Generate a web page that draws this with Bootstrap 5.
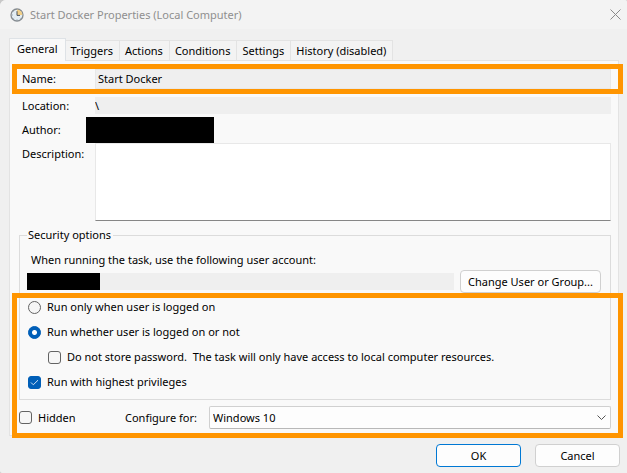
<!DOCTYPE html>
<html lang="en">
<head>
<meta charset="utf-8">
<meta name="viewport" content="width=device-width, initial-scale=1">
<title>Start Docker Properties (Local Computer)</title>
<link href="https://cdn.jsdelivr.net/npm/bootstrap@5.3.0/dist/css/bootstrap.min.css" rel="stylesheet">
<style>
  body { background: #c8c8c8; font-family: "Noto Sans", "Open Sans", sans-serif; font-size: 11px; line-height: 16px; color: #000; }
  .dialog { background: #f0f0f0; border-radius: 6px 2px 0 2px; overflow: hidden; min-height: 100vh; }
  .title-bar { background: #f3f3f3; height: 29px; padding: 0 6px 0 10px; color: #8f8f8f; }
  .title-bar h1 { font-size: 11px; line-height: 16px; font-weight: 400; margin: 0 0 0 6px; }
  .close-x { background: none; border: 0; padding: 0; line-height: 0; color: #8a8a8a; }

  .tabs { padding: 9px 8px 0 9px; border: 0; }
  .tabs .nav-link { color: #000; background: #f3f3f3; border: 1px solid #e3e3e3; border-left: 0; border-bottom: 0; border-radius: 0; padding: 2px 6px 2px 5px; height: 20px; margin: 0; line-height: 16px; }
  .tabs .nav-link.active { color: #000; background: #f9f9f9; border-left: 1px solid #e3e3e3; height: 23px; padding: 2px 7px 4px; margin-bottom: -1px; position: relative; z-index: 1; }

  .sheet { background: #f9f9f9; border: 1px solid #e3e3e3; margin: 0 8px 0 9px; padding: 8px 7px 6px 9px; }
  .field-label { width: 76px; padding-left: 3px; flex: none; }
  .callout-frame { position: absolute; border: 5px solid #ff9500; pointer-events: none; }
  .frame-name { inset: -5px -12px -5px -7px; }
  .frame-security { left: 2px; right: -5px; bottom: -3px; height: 145px; }

  .plain-field { background: #efefef; border: 0; border-radius: 0; padding: 0 2px; font-size: 11px; line-height: 16px; min-height: 0; color: #000; min-width: 0; }
  .plain-field.name-field { height: 20px; border: 1px solid #e8e8e8; padding-bottom: 2px; }
  .plain-field.path-field { height: 17px; padding: 0; }
  .author-row { margin-top: 3px; }
  .notes-label { padding-top: 3px; }
  .redacted { background: #000; flex: none; }
  .redacted.author-name { width: 128px; height: 26px; margin-left: -9px; }
  .redacted.account-name { width: 73px; height: 17px; }
  .notes { border: 1px solid #e8e8e8; border-bottom-color: #868686; border-radius: 0; height: 78px; min-height: 0; font-size: 11px; padding: 2px; resize: none; }

  .group { border: 1px solid #dcdcdc; padding: 0 9px 9px 7px; margin-top: 6px; }
  .group legend { float: none; width: auto; margin: 0 0 9px; padding: 0 2px 0 1px; font-size: 11px; line-height: 16px; }
  .account-fill { background: #efefef; height: 17px; margin-right: 6px; }
  .account-row { margin: 2px 0 6px; }
  .choices { display: flex; flex-direction: column; gap: 9px; }

  .choice { display: flex; align-items: center; gap: 6px; padding: 0; margin: 0; min-height: 16px; }
  .choice .form-check-input { float: none; margin: 0 0 0 1px; width: 13px; height: 13px; flex: none; border: 1px solid #636363; background-color: #f6f6f6; }
  .choice .form-check-input[type=checkbox] { border-radius: 3px; }
  .choice .form-check-input:checked { background-color: #005fb8; border-color: #005fb8; }
  .choice .form-check-input[type=radio]:checked { background-image: radial-gradient(circle, #fff 0 2px, transparent 3px); }
  .choice .form-check-input[type=checkbox]:checked { background-image: url("data:image/svg+xml,%3Csvg xmlns='http://www.w3.org/2000/svg' viewBox='0 0 11 11'%3E%3Cpath d='M2 5.5l2.3 2.3L9 3.2' fill='none' stroke='%23cfe2f5'/%3E%3C/svg%3E"); background-size: 11px 11px; }
  .choice.nested { margin-left: 20px; }
  .options-row { margin-top: 6px; }
  .hidden-choice { width: 106px; flex: none; }
  .hidden-choice .form-check-input { margin-left: 0; }
  .version-label { width: 84px; flex: none; }

  .version-select { font-size: 11px; line-height: 16px; height: 23px; padding: 3px 20px 2px 3px; border: 1px solid #d0d0d0; border-bottom-color: #b8b8b8; border-radius: 2px; color: #000; background-color: #fdfdfd; background-position: right 4px center; background-size: 9px 9px;
    background-image: url("data:image/svg+xml,%3Csvg xmlns='http://www.w3.org/2000/svg' viewBox='0 0 9 9'%3E%3Cpath d='M.5 2.5l4 4 4-4' fill='none' stroke='%23555'/%3E%3C/svg%3E"); }

  .push { font-size: 11px; line-height: 16px; height: 23px; padding: 2px 6px; border: 1px solid #d0d0d0; border-radius: 4px; background: #fdfdfd; color: #000; }
  .push.change-user { width: 141px; }
  .push.answer { width: 85px; }
  .push.default-answer { border-color: #0078d4; }
  .answers { gap: 14px; padding: 8px 7px 5px; }
</style>
</head>
<body>
<main class="dialog">
  <header class="title-bar d-flex align-items-center">
    <svg width="14" height="14" viewBox="0 0 14 14" aria-hidden="true">
      <circle cx="7" cy="7" r="6" fill="#e3edf3" stroke="#858b90" stroke-width="1.3"/>
      <path d="M7 7V1.6A5.4 5.4 0 0 1 12.4 7z" fill="#f2cf86"/>
      <path d="M7 3.2V7.4H10" fill="none" stroke="#48525c" stroke-width="1"/>
      <path d="M2 7h1M7 11.2v1M3.4 3.4l.7.7M3.4 10.6l.7-.7M10.6 10.6l-.7-.7" stroke="#8ba0ae" stroke-width=".8"/>
    </svg>
    <h1>Start Docker Properties (Local Computer)</h1>
    <button class="close-x ms-auto" type="button" aria-label="Close">
      <svg width="11" height="11" viewBox="0 0 11 11"><path d="M.5.5l10 10M10.5.5l-10 10" stroke="currentColor" fill="none"/></svg>
    </button>
  </header>

  <div class="nav nav-tabs tabs align-items-end" role="tablist">
    <button class="nav-link active" type="button" role="tab" aria-selected="true">General</button>
    <button class="nav-link" type="button" role="tab">Triggers</button>
    <button class="nav-link" type="button" role="tab">Actions</button>
    <button class="nav-link" type="button" role="tab">Conditions</button>
    <button class="nav-link" type="button" role="tab">Settings</button>
    <button class="nav-link" type="button" role="tab">History (disabled)</button>
  </div>

  <section class="sheet position-relative" role="tabpanel">
    <div class="d-flex align-items-center position-relative">
      <label class="field-label" for="task-name">Name:</label>
      <input class="form-control plain-field name-field" id="task-name" type="text" value="Start Docker" readonly>
      <div class="callout-frame frame-name"></div>
    </div>
    <div class="d-flex align-items-center mt-2">
      <label class="field-label" for="task-path">Location:</label>
      <input class="form-control plain-field path-field" id="task-path" type="text" value="\" readonly>
    </div>
    <div class="author-row d-flex align-items-center">
      <span class="field-label">Author:</span>
      <span class="redacted author-name"></span>
    </div>
    <div class="d-flex align-items-start">
      <label class="field-label notes-label" for="task-notes">Description:</label>
      <textarea class="form-control notes" id="task-notes"></textarea>
    </div>

    <fieldset class="group">
      <legend>Security options</legend>
      <div class="ps-1">When running the task, use the following user account:</div>
      <div class="account-row d-flex align-items-center">
        <span class="redacted account-name"></span>
        <span class="account-fill flex-grow-1"></span>
        <button class="btn push change-user text-nowrap" type="button">Change User or Group...</button>
      </div>
      <div class="choices">
        <div class="form-check choice">
          <input class="form-check-input" type="radio" name="logon" id="logon-only">
          <label for="logon-only">Run only when user is logged on</label>
        </div>
        <div class="form-check choice">
          <input class="form-check-input" type="radio" name="logon" id="logon-any" checked>
          <label for="logon-any">Run whether user is logged on or not</label>
        </div>
        <div class="form-check choice nested">
          <input class="form-check-input" type="checkbox" id="no-password">
          <label for="no-password">Do not store password.&nbsp; The task will only have access to local computer resources.</label>
        </div>
        <div class="form-check choice">
          <input class="form-check-input" type="checkbox" id="privileges" checked>
          <label for="privileges">Run with highest privileges</label>
        </div>
      </div>
    </fieldset>

    <div class="options-row d-flex align-items-center">
      <div class="form-check choice hidden-choice">
        <input class="form-check-input" type="checkbox" id="hidden-task">
        <label for="hidden-task">Hidden</label>
      </div>
      <label class="version-label" for="version">Configure for:</label>
      <select class="form-select version-select" id="version"><option>Windows 10</option></select>
    </div>
    <div class="callout-frame frame-security"></div>
  </section>

  <footer class="answers d-flex justify-content-end">
    <button class="btn push answer default-answer" type="button">OK</button>
    <button class="btn push answer" type="button">Cancel</button>
  </footer>
</main>
<script src="https://cdn.jsdelivr.net/npm/bootstrap@5.3.0/dist/js/bootstrap.bundle.min.js"></script>
</body>
</html>
